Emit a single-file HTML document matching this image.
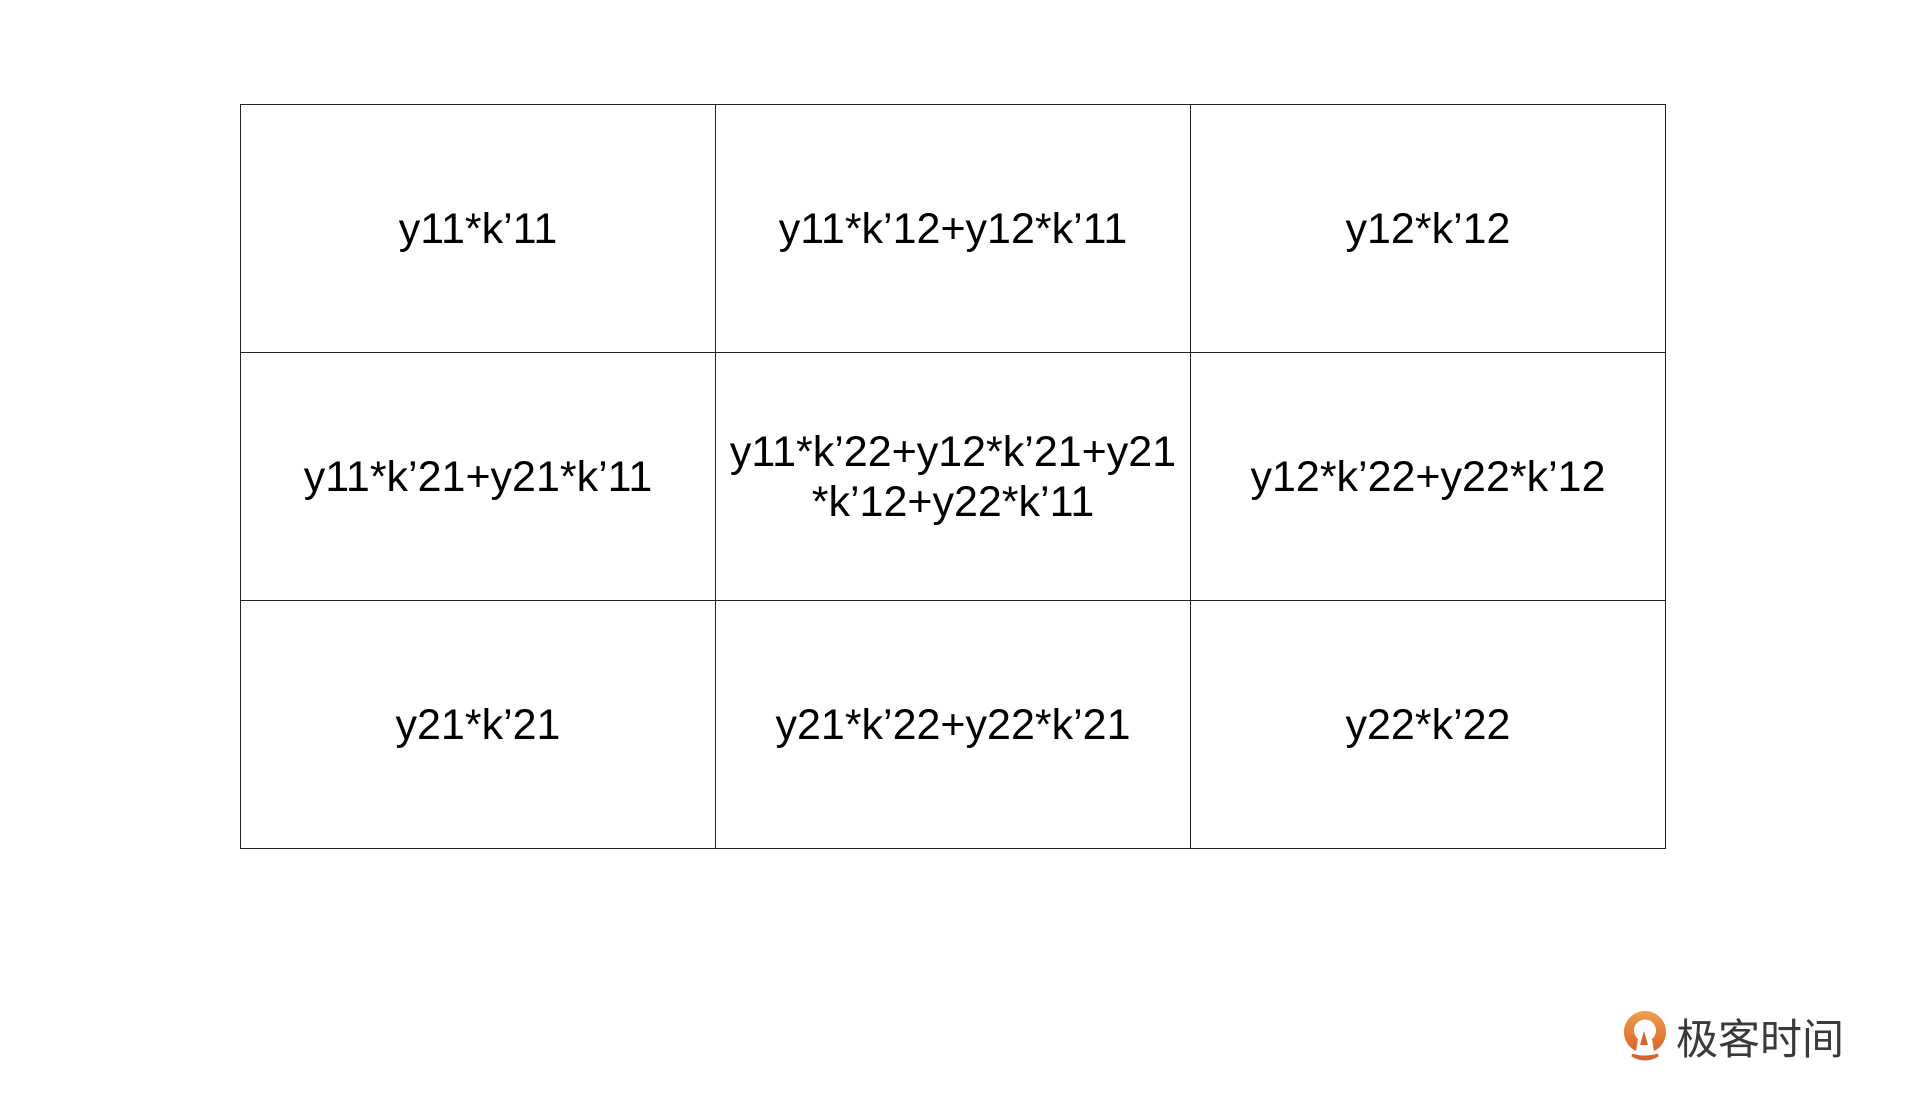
<!DOCTYPE html>
<html><head><meta charset="utf-8"><style>
html,body{margin:0;padding:0;background:#fff;width:1920px;height:1110px;overflow:hidden;}
table{position:absolute;left:240px;top:104px;border-collapse:collapse;font-family:"Liberation Sans",sans-serif;font-size:43px;color:#000;}
td{border:1.5px solid #222;width:474px;height:247px;padding:0;text-align:center;vertical-align:middle;line-height:50px;}
.logo{position:absolute;left:1622px;top:1006px;display:flex;align-items:center;}
.logo span{font-family:"Noto Sans CJK SC",sans-serif;font-size:42px;color:#3a3a3a;margin-left:8px;}
</style></head><body>
<table>
<tr><td>y11*k’11</td><td>y11*k’12+y12*k’11</td><td>y12*k’12</td></tr>
<tr><td>y11*k’21+y21*k’11</td><td>y11*k’22+y12*k’21+y21<br>*k’12+y22*k’11</td><td>y12*k’22+y22*k’12</td></tr>
<tr><td>y21*k’21</td><td>y21*k’22+y22*k’21</td><td>y22*k’22</td></tr>
</table>
<div class="logo">
<svg width="46" height="56" viewBox="0 0 46 56">
<defs><linearGradient id="g" x1="0" y1="0" x2="0" y2="1"><stop offset="0" stop-color="#f0a050"/><stop offset="1" stop-color="#d9642a"/></linearGradient></defs>
<path d="M23 2 A21 21 0 0 0 14 42 L16 30 A11 11 0 1 1 30 30 L32 42 A21 21 0 0 0 23 2Z" fill="url(#g)"/>
<path d="M18 36 L22 22 L26 36 Z" fill="#d9642a"/>
<path d="M10 46 Q23 54 36 46 Q23 50 10 46Z" fill="#d9642a" stroke="#d9642a" stroke-width="3"/>
</svg>
<span>极客时间</span>
</div>
</body></html>
